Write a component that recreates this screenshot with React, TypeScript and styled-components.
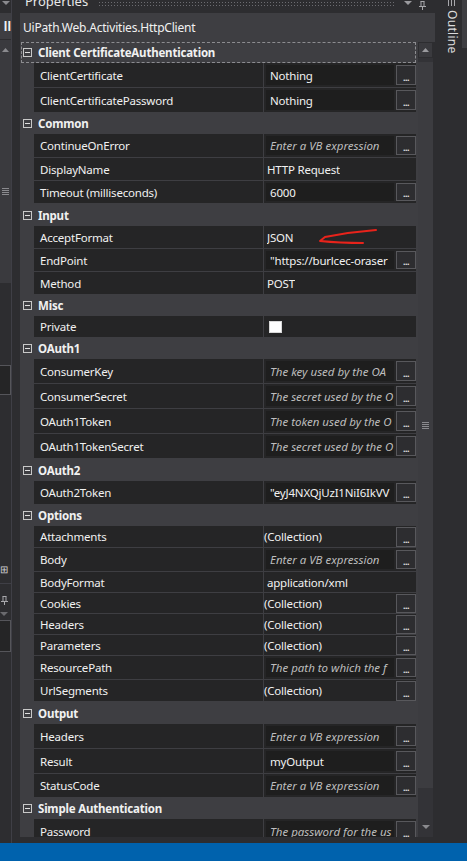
import styled, { createGlobalStyle, css } from "styled-components";

const GlobalStyle = createGlobalStyle`
  html, body {
    margin: 0;
    padding: 0;
    background: #2d2d30;
  }
  body {
    font-family: "Noto Sans", "Open Sans", sans-serif;
    font-size: 11.5px;
    letter-spacing: -0.2px;
    color: #f1f1f1;
  }
  * {
    box-sizing: border-box;
  }
`;

const Screen = styled.div`
  width: 467px;
  height: 861px;
  display: flex;
  flex-direction: column;
  overflow: hidden;
  background: #2d2d30;
`;

const Workspace = styled.div`
  flex: 1;
  min-height: 0;
  display: flex;
`;

const StatusBar = styled.div`
  height: 18px;
  flex: none;
  background: #0062ad;
`;

/* ---------- left strip (neighbouring tool window) ---------- */

const LeftStrip = styled.div`
  width: 20px;
  flex: none;
  display: flex;
  background: #2d2d30;
`;

const LeftPane = styled.div`
  width: 12px;
  display: flex;
  flex-direction: column;
  border-right: 1px solid #3f3f46;
`;

const PaneCaret = styled.div`
  height: 13px;
  display: flex;
  justify-content: center;
  align-items: flex-start;
  padding-top: 1px;
`;

const PaneLabel = styled.div`
  height: 27px;
  display: flex;
  align-items: center;
  justify-content: flex-end;
  overflow: hidden;
  background: #3e3e42;
  font-size: 12px;
  font-weight: 700;
  letter-spacing: 0;
  white-space: nowrap;
  border-bottom: 1px solid #2d2d30;
`;

const PaneScroll = styled.div`
  height: 243px;
  display: flex;
  flex-direction: column;
  align-items: center;
  background: #3a3a3e;
  padding-top: 8px;
  gap: 136px;
`;

const PaneBody = styled.div`
  flex: 1;
  display: flex;
  flex-direction: column;
  background: #2d2d30;
  padding-top: 82px;
`;

const PaneField = styled.div<{ $h: number }>`
  height: ${(p) => p.$h}px;
  border: 1px solid #55555a;
  border-left: none;
  background: #252526;
`;

const PaneIcon = styled.div<{ $top: number }>`
  margin-top: ${(p) => p.$top}px;
  height: 12px;
  display: flex;
  align-items: center;
  color: #d0d0d0;
  font-size: 10px;
  line-height: 10px;
`;

const PaneRule = styled.div`
  margin-top: 8px;
  height: 1px;
  background: #3f3f46;
`;

/* ---------- properties window ---------- */

const PropertiesPanel = styled.div`
  width: 415px;
  flex: none;
  display: flex;
  flex-direction: column;
`;

const TitleBar = styled.div`
  height: 13px;
  flex: none;
  display: flex;
  align-items: flex-start;
  overflow: hidden;
  background: #2d2d30;
  padding-left: 5px;
  padding-right: 8px;
`;

const TitleText = styled.span`
  margin-top: -5px;
  font-size: 13px;
  line-height: 13px;
  letter-spacing: 0;
  color: #e8e8e8;
`;

const TitleGrip = styled.div`
  flex: 1;
  height: 6px;
  margin: 1px 8px 0 10px;
  background-image: radial-gradient(#6b6b70 0.7px, transparent 0.8px);
  background-size: 3px 3px;
`;

const TitleIcons = styled.div`
  display: flex;
  gap: 6px;
  align-items: flex-start;
  padding-top: 1px;
`;

const Subtitle = styled.div`
  height: 29px;
  flex: none;
  display: flex;
  align-items: center;
  padding-left: 3px;
  background: #3e3e42;
  color: #f1f1f1;
  font-size: 12px;
`;

const Body = styled.div`
  flex: 1;
  min-height: 0;
  display: flex;
  background: #3e3e42;
  border-right: 2px solid #2d2d30;
`;

const PanelFoot = styled.div`
  height: 6px;
  flex: none;
  background: #2d2d30;
`;

const Grid = styled.div`
  width: 396px;
  flex: none;
  overflow: hidden;
  display: flex;
  flex-direction: column;
`;

const CategoryRow = styled.div<{ $h: number; $focused?: boolean }>`
  height: ${(p) => p.$h}px;
  flex: none;
  display: flex;
  align-items: center;
  gap: 6px;
  padding-left: 3px;
  background: #3e3e42;
  font-weight: 700;
  color: #f1f1f1;
  ${(p) =>
    p.$focused &&
    css`
      outline: 1px dashed #8c8c90;
      outline-offset: -1px;
      margin-left: 1px;
      padding-left: 2px;
    `}
`;

const Collapse = styled.span`
  width: 9px;
  height: 9px;
  flex: none;
  border: 1px solid #c8c8c8;
  display: flex;
  align-items: center;
  justify-content: center;
  &::after {
    content: "";
    width: 5px;
    height: 1px;
    background: #e0e0e0;
  }
`;

const PropRow = styled.div<{ $h: number }>`
  height: ${(p) => p.$h}px;
  flex: none;
  display: flex;
  padding-left: 14px;
`;

const NameCell = styled.div`
  width: 230px;
  flex: none;
  display: flex;
  align-items: center;
  padding-left: 6px;
  background: #252526;
  border-right: 1px solid #3e3e42;
  border-bottom: 1px solid #3e3e42;
  white-space: nowrap;
  overflow: hidden;
`;

const ValueCell = styled.div<{ $pad: number }>`
  position: relative;
  flex: 1;
  min-width: 0;
  display: flex;
  align-items: center;
  gap: 2px;
  padding-left: ${(p) => p.$pad}px;
  background: #252526;
  border-bottom: 1px solid #3e3e42;
`;

const ValueBox = styled.div<{ $italic?: boolean }>`
  width: 128px;
  flex: none;
  height: calc(100% - 4px);
  display: flex;
  align-items: center;
  padding-left: 4px;
  overflow: hidden;
  white-space: nowrap;
  background: #1e1e1e;
  color: ${(p) => (p.$italic ? "#bdbdbd" : "#f1f1f1")};
  font-style: ${(p) => (p.$italic ? "italic" : "normal")};
  letter-spacing: ${(p) => (p.$italic ? "0" : "-0.2px")};
`;

const PlainText = styled.span`
  white-space: nowrap;
  overflow: hidden;
  color: #f1f1f1;
`;

const CollectionText = styled.span`
  width: 130px;
  flex: none;
  white-space: nowrap;
  color: #f1f1f1;
`;

const EllipsisButton = styled.div<{ $full?: boolean }>`
  width: 20px;
  flex: none;
  height: ${(p) => (p.$full ? "calc(100% - 1px)" : "calc(100% - 4px)")};
  display: flex;
  align-items: flex-end;
  justify-content: center;
  padding-bottom: 3px;
  background: #2d2d30;
  border: 1px solid #58585c;
  color: #e0e0e0;
  font-size: 9px;
  font-weight: 700;
  line-height: 6px;
  letter-spacing: -0.5px;
`;

const CheckBox = styled.span`
  width: 13px;
  height: 12px;
  margin-left: 5px;
  background: #ffffff;
  border: 1px solid #d8d8d8;
`;

const Annotation = styled.svg`
  position: absolute;
  left: 0;
  top: 0;
  pointer-events: none;
`;

/* ---------- scrollbar ---------- */

const ScrollTrack = styled.div`
  width: 15px;
  margin-left: 2px;
  flex: none;
  display: flex;
  flex-direction: column;
  background: #333337;
`;

const ScrollArrow = styled.div`
  height: 16px;
  flex: none;
  display: flex;
  align-items: center;
  justify-content: center;
  background: #3a3a3e;
  border: 1px solid #2d2d30;
`;

const ScrollThumb = styled.div`
  height: 726px;
  flex: none;
  margin-top: 4px;
  display: flex;
  align-items: center;
  justify-content: center;
  background: #3c3c40;
`;

const Grip = styled.span`
  width: 7px;
  height: 7px;
  background: repeating-linear-gradient(
    to bottom,
    #8a8a8e 0 1px,
    transparent 1px 2px
  );
`;

const ScrollRest = styled.div`
  flex: 1;
`;

const ScrollBottom = styled.div`
  height: 16px;
  flex: none;
  margin-bottom: 2px;
  display: flex;
  align-items: center;
  justify-content: center;
`;

/* ---------- right dock ---------- */

const SideDock = styled.div`
  width: 32px;
  flex: none;
  display: flex;
  background: #2d2d30;
`;

const DockGap = styled.div`
  width: 11px;
`;

const DockTab = styled.div`
  width: 12px;
  display: flex;
  flex-direction: column;
  align-items: center;
`;

const DockTabIcon = styled.div`
  height: 6px;
  width: 9px;
  background: repeating-linear-gradient(
    to right,
    #a8a8ac 0 1px,
    transparent 1px 3px
  );
`;

const DockTabText = styled.span`
  writing-mode: vertical-rl;
  font-size: 12px;
  line-height: 12px;
  letter-spacing: 0.3px;
  color: #dcdcdc;
  margin-top: 4px;
`;

const DockEdge = styled.div`
  flex: 1;
  display: flex;
  flex-direction: column;
  align-items: flex-end;
`;

const DockEdgeTop = styled.div`
  width: 5px;
  height: 48px;
  background: #3e3e42;
`;

/* ---------- data ---------- */

type Value =
  | { kind: "box"; text: string; italic?: boolean }
  | { kind: "plain"; text: string; arrow?: boolean }
  | { kind: "collection" }
  | { kind: "check" };

interface Prop {
  name: string;
  h: number;
  value: Value;
}

interface Category {
  title: string;
  h: number;
  focused?: boolean;
  props: Prop[];
}

const VB = "Enter a VB expression";

const categories: Category[] = [
  {
    title: "Client CertificateAuthentication",
    h: 21,
    focused: true,
    props: [
      { name: "ClientCertificate", h: 25, value: { kind: "box", text: "Nothing" } },
      { name: "ClientCertificatePassword", h: 25, value: { kind: "box", text: "Nothing" } },
    ],
  },
  {
    title: "Common",
    h: 21,
    props: [
      { name: "ContinueOnError", h: 24, value: { kind: "box", text: VB, italic: true } },
      { name: "DisplayName", h: 23, value: { kind: "plain", text: "HTTP Request" } },
      { name: "Timeout (milliseconds)", h: 23, value: { kind: "box", text: "6000" } },
    ],
  },
  {
    title: "Input",
    h: 22,
    props: [
      { name: "AcceptFormat", h: 23, value: { kind: "plain", text: "JSON", arrow: true } },
      { name: "EndPoint", h: 23, value: { kind: "box", text: "\"https://burlcec-oraser" } },
      { name: "Method", h: 23, value: { kind: "plain", text: "POST" } },
    ],
  },
  {
    title: "Misc",
    h: 21,
    props: [{ name: "Private", h: 22, value: { kind: "check" } }],
  },
  {
    title: "OAuth1",
    h: 21,
    props: [
      { name: "ConsumerKey", h: 25, value: { kind: "box", text: "The key used by the OA", italic: true } },
      { name: "ConsumerSecret", h: 25, value: { kind: "box", text: "The secret used by the O", italic: true } },
      { name: "OAuth1Token", h: 25, value: { kind: "box", text: "The token used by the O", italic: true } },
      { name: "OAuth1TokenSecret", h: 25, value: { kind: "box", text: "The secret used by the O", italic: true } },
    ],
  },
  {
    title: "OAuth2",
    h: 22,
    props: [
      { name: "OAuth2Token", h: 24, value: { kind: "box", text: "\"eyJ4NXQjUzI1NiI6IkVV" } },
    ],
  },
  {
    title: "Options",
    h: 21,
    props: [
      { name: "Attachments", h: 22, value: { kind: "collection" } },
      { name: "Body", h: 24, value: { kind: "box", text: VB, italic: true } },
      { name: "BodyFormat", h: 21, value: { kind: "plain", text: "application/xml" } },
      { name: "Cookies", h: 21, value: { kind: "collection" } },
      { name: "Headers", h: 21, value: { kind: "collection" } },
      { name: "Parameters", h: 21, value: { kind: "collection" } },
      { name: "ResourcePath", h: 24, value: { kind: "box", text: "The path to which the f", italic: true } },
      { name: "UrlSegments", h: 22, value: { kind: "collection" } },
    ],
  },
  {
    title: "Output",
    h: 22,
    props: [
      { name: "Headers", h: 25, value: { kind: "box", text: VB, italic: true } },
      { name: "Result", h: 25, value: { kind: "box", text: "myOutput" } },
      { name: "StatusCode", h: 24, value: { kind: "box", text: VB, italic: true } },
    ],
  },
  {
    title: "Simple Authentication",
    h: 21,
    props: [
      { name: "Password", h: 25, value: { kind: "box", text: "The password for the us", italic: true } },
    ],
  },
];

const RedArrow = () => (
  <Annotation width="152" height="23" viewBox="0 0 152 23">
    <path
      d="M112 4 Q 86 6 61 11 L 56 15 Q 76 17 99 17"
      fill="none"
      stroke="#e8231b"
      strokeWidth="2"
      strokeLinecap="round"
      strokeLinejoin="round"
    />
  </Annotation>
);

const PropValue = ({ value }: { value: Value }) => {
  switch (value.kind) {
    case "box":
      return (
        <ValueCell $pad={2}>
          <ValueBox $italic={value.italic}>{value.text}</ValueBox>
          <EllipsisButton>...</EllipsisButton>
        </ValueCell>
      );
    case "plain":
      return (
        <ValueCell $pad={3}>
          <PlainText>{value.text}</PlainText>
          {value.arrow && <RedArrow />}
        </ValueCell>
      );
    case "collection":
      return (
        <ValueCell $pad={0}>
          <CollectionText>(Collection)</CollectionText>
          <EllipsisButton $full>...</EllipsisButton>
        </ValueCell>
      );
    case "check":
      return (
        <ValueCell $pad={0}>
          <CheckBox />
        </ValueCell>
      );
  }
};

const CaretDown = ({ color = "#9a9a9e" }: { color?: string }) => (
  <svg width="8" height="5" viewBox="0 0 8 5">
    <path d="M0 0 L8 0 L4 4 Z" fill={color} />
  </svg>
);

const CaretUp = ({ color = "#9a9a9e" }: { color?: string }) => (
  <svg width="7" height="4" viewBox="0 0 7 4">
    <path d="M0 4 L7 4 L3.5 0 Z" fill={color} />
  </svg>
);

const PinIcon = () => (
  <svg width="9" height="9" viewBox="0 0 9 9">
    <path
      d="M2.5 0.5 H6.5 M3 0.5 V5 M6 0.5 V5 M1 5.5 H8 M4.5 5.5 V9"
      stroke="#a8a8ac"
      strokeWidth="1"
      fill="none"
    />
  </svg>
);

export default function App() {
  return (
    <>
      <GlobalStyle />
      <Screen>
        <Workspace>
          <LeftStrip>
            <LeftPane>
              <PaneCaret>
                <CaretDown color="#8a8a8e" />
              </PaneCaret>
              <PaneLabel>ll</PaneLabel>
              <PaneScroll>
                <CaretUp color="#8a8a8e" />
                <Grip />
              </PaneScroll>
              <PaneBody>
                <PaneField $h={30} />
                <PaneIcon $top={168}>⊞</PaneIcon>
                <PaneRule />
                <PaneIcon $top={10}>
                  <PinIcon />
                </PaneIcon>
                <PaneIcon $top={2}>
                  <CaretDown color="#6a6a6e" />
                </PaneIcon>
                <PaneField $h={32} />
              </PaneBody>
            </LeftPane>
          </LeftStrip>

          <PropertiesPanel>
            <TitleBar>
              <TitleText>Properties</TitleText>
              <TitleGrip />
              <TitleIcons>
                <CaretDown />
                <PinIcon />
              </TitleIcons>
            </TitleBar>
            <Subtitle>UiPath.Web.Activities.HttpClient</Subtitle>
            <Body>
              <Grid>
                {categories.map((cat) => (
                  <div key={cat.title}>
                    <CategoryRow $h={cat.h} $focused={cat.focused}>
                      <Collapse />
                      {cat.title}
                    </CategoryRow>
                    {cat.props.map((prop) => (
                      <PropRow key={cat.title + prop.name} $h={prop.h}>
                        <NameCell>{prop.name}</NameCell>
                        <PropValue value={prop.value} />
                      </PropRow>
                    ))}
                  </div>
                ))}
              </Grid>
              <ScrollTrack>
                <ScrollArrow>
                  <CaretUp />
                </ScrollArrow>
                <ScrollThumb>
                  <Grip />
                </ScrollThumb>
                <ScrollRest />
                <ScrollBottom>
                  <CaretDown color="#8a8a8e" />
                </ScrollBottom>
              </ScrollTrack>
            </Body>
            <PanelFoot />
          </PropertiesPanel>

          <SideDock>
            <DockGap />
            <DockTab>
              <DockTabIcon />
              <DockTabText>Outline</DockTabText>
            </DockTab>
            <DockEdge>
              <DockEdgeTop />
            </DockEdge>
          </SideDock>
        </Workspace>
        <StatusBar />
      </Screen>
    </>
  );
}
